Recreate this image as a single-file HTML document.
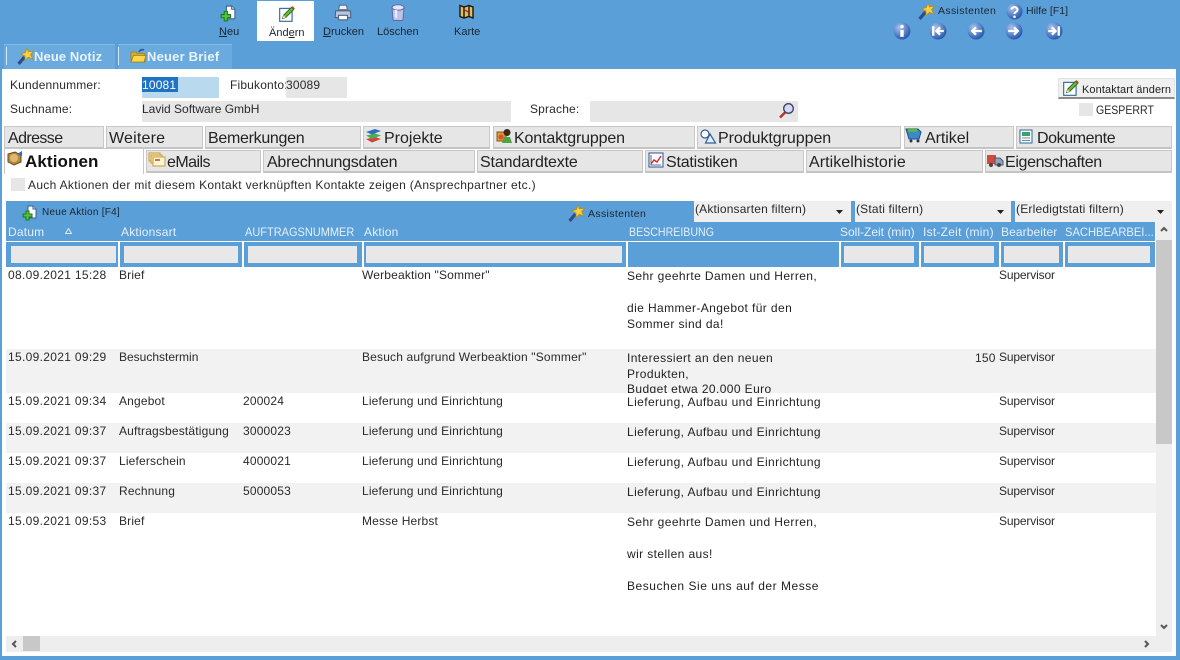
<!DOCTYPE html>
<html lang="de"><head><meta charset="utf-8"><title>Kontakt</title>
<style>
html,body{margin:0;padding:0}
body{width:1180px;height:660px;position:relative;overflow:hidden;background:#5b9fd9;font-family:"Liberation Sans",sans-serif;font-size:12px;color:#222}
div,span.a,svg.a{position:absolute}
.t{position:absolute;white-space:nowrap;line-height:14px}
.tb{font-size:11px;color:#1a2530;text-align:center}
.f{background:#e6e6e6}
.tab{position:absolute;background:#e6e6e6;border:1px solid #c8c8c8;border-bottom:2px solid #c4c4c4;box-sizing:border-box;font-size:16px;line-height:23px;color:#222;white-space:nowrap;padding-left:3px}
.r1{top:126px;height:23px}
.r2{top:150px;height:23px}
.g{font-size:12px;letter-spacing:.17px;color:#2a2a2a}
.n{font-size:12px;letter-spacing:.32px;color:#2a2a2a}
.s{font-size:12px;letter-spacing:-.15px;color:#2a2a2a}
.d{font-size:12px;letter-spacing:.4px;color:#222}
.h{font-size:12px;letter-spacing:.2px;color:#e4f0fa;top:225px}
.u{letter-spacing:0;transform-origin:0 50%}
.in{top:246px;height:17px;background:#e8e8e8}
.sep{top:242px;width:2px;height:25px;background:#fff}
</style></head><body>
<svg width="0" height="0" style="position:absolute"><defs>
<symbol id="wand" viewBox="0 0 16 16"><path d="M1.500 15L7 8.500" stroke="#2c4c8c" stroke-width="3"/><path d="M9.500 0l1.200 3.600L15.500 3l-2.800 3.200L15 10.500l-4.300-1.800L7.500 12l.1-4.500L3.500 5.500l4.300-1.200z" fill="#f7d23c" stroke="#b58a1a" stroke-width=".7"/></symbol>
<symbol id="doc" viewBox="0 0 16 16"><path d="M6 1h5l3 3v9H6z" fill="#fff" stroke="#3a5f8f"/><path d="M11 1v3h3" fill="#cfe0f0" stroke="#3a5f8f"/><path d="M4 6h3v3h3v3H7v3H4v-3H1V9h3z" fill="#53c23d" stroke="#1d7a18"/></symbol>
<symbol id="pen" viewBox="0 0 16 16"><rect x="1.500" y="3" width="11" height="11.500" fill="#fff" stroke="#2a6a9a"/><path d="M4 12l1-3 7-7 2 2-7 7z" fill="#6fb33c" stroke="#2d6a1a" stroke-width=".8"/><path d="M12 2l1-1 2 2-1 1z" fill="#d8402a"/><path d="M4 12l1-3 2 2z" fill="#f0d8a8"/></symbol>
</defs></svg>

<!-- top toolbar -->
<div style="left:257px;top:1px;width:57px;height:40px;background:#fff"></div>
<svg class="a" style="left:220px;top:5px" width="17" height="17"><use href="#doc"/></svg>
<svg class="a" style="left:278px;top:5px" width="18" height="18"><use href="#pen"/></svg>
<svg class="a" style="left:334px;top:4px" width="18" height="18" viewBox="0 0 16 16"><path d="M5 1h6l1 4H4z" fill="#eef0f6" stroke="#5a6f8c"/><path d="M1.500 6h13l.5 6H1z" fill="#b9c6dc" stroke="#4f6484"/><path d="M4 10h8v4H4z" fill="#fff" stroke="#4f6484"/></svg>
<svg class="a" style="left:390px;top:4px" width="16" height="17" viewBox="0 0 16 17"><path d="M2 4h12l-1 11.500a1 1 0 0 1-1 1H4a1 1 0 0 1-1-1z" fill="#bcc0ea" stroke="#5f6aa5"/><ellipse cx="8" cy="3.500" rx="6" ry="2.700" fill="#e4e6fa" stroke="#5f6aa5"/><path d="M6 6v8" stroke="#e9ebfb" stroke-width="2.500"/></svg>
<svg class="a" style="left:459px;top:4px" width="15" height="15" viewBox="0 0 15 15"><path d="M1 1.500l4 1.500 5-1.500 4 1.500v11L10 12.500 5 14l-4-1.500z" fill="#dfbd6a" stroke="#1c1606" stroke-width="1.400"/><path d="M5 3v11M10 1.500v11" stroke="#1c1606" stroke-width="1.400"/><path d="M6 6l3 2" stroke="#b33" stroke-width="1.500"/></svg>
<span class="t tb" style="left:219px;top:25px"><u>N</u>eu</span>
<span class="t tb" style="left:269px;top:26px">Änd<u>e</u>rn</span>
<span class="t tb" style="left:323px;top:25px"><u>D</u>rucken</span>
<span class="t tb" style="left:377px;top:25px">Löschen</span>
<span class="t tb" style="left:454px;top:25px">Karte</span>

<!-- top right -->
<svg class="a" style="left:918px;top:3px" width="17" height="17"><use href="#wand"/></svg>
<span class="t" style="left:938px;top:4px;font-size:10.500px;letter-spacing:.35px;color:#1a2530">Assistenten</span>
<svg class="a" style="left:1006px;top:3px" width="17" height="17" viewBox="0 0 17 17"><defs><radialGradient id="b" cx=".35" cy=".3" r=".8"><stop offset="0" stop-color="#a6c4ef"/><stop offset="1" stop-color="#1a4ca3"/></radialGradient></defs><circle cx="8.500" cy="8.500" r="8" fill="url(#b)"/><path d="M5.500 6.500a3 2.500 0 1 1 4.500 2.300c-1 .6-1.500 1-1.500 2.200" fill="none" stroke="#fff" stroke-width="2"/><circle cx="8.500" cy="13.800" r="1.300" fill="#fff"/></svg>
<span class="t" style="left:1026px;top:4px;font-size:10.500px;color:#1a2530">Hilfe [F1]</span>
<svg class="a" style="left:893px;top:22px" width="18" height="18" viewBox="0 0 17 17"><circle cx="8.500" cy="8.500" r="8" fill="url(#b)"/><circle cx="8.500" cy="4.300" r="1.700" fill="#fff"/><path d="M8.500 7.500v6.500" stroke="#fff" stroke-width="3.200"/></svg>
<svg class="a" style="left:929px;top:22px" width="18" height="18" viewBox="0 0 17 17"><circle cx="8.500" cy="8.500" r="8" fill="url(#b)"/><path d="M4 4v9" stroke="#fff" stroke-width="2.200"/><path d="M14 8.500H8M10.500 5l-3.500 3.500 3.500 3.500" fill="none" stroke="#fff" stroke-width="2.200"/></svg>
<svg class="a" style="left:967px;top:22px" width="18" height="18" viewBox="0 0 17 17"><circle cx="8.500" cy="8.500" r="8" fill="url(#b)"/><path d="M14 8.500H5M8.500 5L5 8.500 8.500 12" fill="none" stroke="#fff" stroke-width="2.200"/></svg>
<svg class="a" style="left:1005px;top:22px" width="18" height="18" viewBox="0 0 17 17"><circle cx="8.500" cy="8.500" r="8" fill="url(#b)"/><path d="M3 8.500h9M8.500 5L12 8.500 8.500 12" fill="none" stroke="#fff" stroke-width="2.200"/></svg>
<svg class="a" style="left:1045px;top:22px" width="18" height="18" viewBox="0 0 17 17"><circle cx="8.500" cy="8.500" r="8" fill="url(#b)"/><path d="M13 4v9" stroke="#fff" stroke-width="2.200"/><path d="M3 8.500h6M6.500 5L10 8.500 6.500 12" fill="none" stroke="#fff" stroke-width="2.200"/></svg>

<!-- note/letter buttons -->
<div style="left:4px;top:44px;width:111px;height:25px;background:#6aaadf;border-top:1px solid #82b8e4;box-sizing:border-box"></div>
<div style="left:6px;top:47px;width:1px;height:18px;background:#d5e6f5"></div>
<div style="left:118px;top:44px;width:114px;height:25px;background:#6aaadf;border-top:1px solid #82b8e4;box-sizing:border-box"></div>
<div style="left:118px;top:47px;width:1px;height:18px;background:#d5e6f5"></div>
<svg class="a" style="left:17px;top:48px" width="17" height="17"><use href="#wand"/></svg>
<svg class="a" style="left:130px;top:48px" width="17" height="16" viewBox="0 0 17 16"><path d="M1 4h5l1 1.500h8V14H1z" fill="#e0ac22" stroke="#a77c15" stroke-width=".8"/><path d="M1 14l2.500-6.500H16L14 14z" fill="#f8d64e" stroke="#a77c15" stroke-width=".8"/><path d="M9 4c1-2 3-3 5-2" fill="none" stroke="#2f5c9c" stroke-width="1.800"/></svg>
<span class="t" style="left:34px;top:50px;font-size:13px;letter-spacing:.1px;font-weight:bold;color:#e9f3fb">Neue Notiz</span>
<span class="t" style="left:147px;top:50px;font-size:13px;letter-spacing:.2px;font-weight:bold;color:#e9f3fb">Neuer Brief</span>

<!-- main panel -->
<div style="left:2px;top:69px;width:1174px;height:587px;background:#fff"></div>

<span class="t g" style="left:10px;top:78px">Kundennummer:</span>
<div style="left:142px;top:77px;width:77px;height:21px;background:#b9d9ee"></div>
<div style="left:142px;top:77px;width:36px;height:15px;background:#1f73c4"></div>
<span class="t g" style="left:142px;top:78px;color:#fff">10081</span>
<span class="t g" style="left:230px;top:78px">Fibukonto:</span>
<div class="f" style="left:286px;top:77px;width:61px;height:21px"></div>
<span class="t g" style="left:286px;top:78px">30089</span>
<span class="t g" style="left:10px;top:102px">Suchname:</span>
<div class="f" style="left:142px;top:101px;width:369px;height:21px"></div>
<span class="t" style="left:142px;top:102px;color:#2a2a2a">Lavid Software GmbH</span>
<span class="t g" style="left:530px;top:102px">Sprache:</span>
<div class="f" style="left:590px;top:101px;width:208px;height:21px"></div>
<svg class="a" style="left:778px;top:102px" width="17" height="17" viewBox="0 0 17 17"><path d="M2 15.500l5-5" stroke="#b5352a" stroke-width="2.500"/><circle cx="10.500" cy="6.500" r="4.800" fill="#d5d9f5" stroke="#3a3f6a" stroke-width="1.300"/></svg>

<div style="left:1058px;top:78px;width:117px;height:21px;background:#f0f0f0;border:1px solid #e2e2e2;border-bottom:2px solid #8a8a8a;box-sizing:border-box"></div>
<svg class="a" style="left:1062px;top:79px" width="18" height="18"><use href="#pen"/></svg>
<span class="t" style="left:1082px;top:83px;font-size:11px;letter-spacing:.1px">Kontaktart ändern</span>
<div class="f" style="left:1079px;top:103px;width:14px;height:13px"></div>
<span class="t u" style="left:1096px;top:103px;font-size:12px;transform:scaleX(.88);color:#2a2a2a">GESPERRT</span>

<!-- tabs row 1 -->
<div class="tab r1" style="left:4px;width:100px;letter-spacing:-.6px">Adresse</div>
<div class="tab r1" style="left:106px;width:97px;padding-left:2px;letter-spacing:.2px">Weitere</div>
<div class="tab r1" style="left:205px;width:156px;padding-left:2px;letter-spacing:-.3px">Bemerkungen</div>
<div class="tab r1" style="left:363px;width:127px;padding-left:20px">Projekte</div>
<div class="tab r1" style="left:493px;width:202px;padding-left:20px;letter-spacing:-.15px">Kontaktgruppen</div>
<div class="tab r1" style="left:697px;width:204px;padding-left:20px;letter-spacing:-.05px">Produktgruppen</div>
<div class="tab r1" style="left:904px;width:110px;padding-left:20px;letter-spacing:-.05px">Artikel</div>
<div class="tab r1" style="left:1016px;width:156px;padding-left:20px;letter-spacing:-.4px">Dokumente</div>
<!-- tabs row 2 -->
<div class="tab r2" style="left:146px;width:115px;padding-left:20px;letter-spacing:-.55px">eMails</div>
<div class="tab r2" style="left:263px;width:212px;letter-spacing:-.25px">Abrechnungsdaten</div>
<div class="tab r2" style="left:477px;width:166px;padding-left:2px;letter-spacing:-.15px">Standardtexte</div>
<div class="tab r2" style="left:645px;width:159px;padding-left:20px;letter-spacing:-.2px">Statistiken</div>
<div class="tab r2" style="left:806px;width:177px;padding-left:2px;letter-spacing:.05px">Artikelhistorie</div>
<div class="tab r2" style="left:985px;width:187px;padding-left:19px;letter-spacing:-.35px">Eigenschaften</div>
<div style="left:4px;top:148px;width:140px;height:26px;background:#fff;border:1px solid #c8c8c8;border-bottom:0;box-sizing:border-box"></div>
<span class="t" style="left:25px;top:152px;font-size:17px;line-height:20px;letter-spacing:.1px;font-weight:bold;color:#111">Aktionen</span>

<!-- tab icons -->
<svg class="a" style="left:365px;top:128px" width="17" height="16" viewBox="0 0 17 16"><path d="M1 11l9-2 6 2-9 3.500z" fill="#d8423a"/><path d="M1 7.500l9-2 6 2-9 3.500z" fill="#4cae4c"/><path d="M1 4l9-3 6 2-9 3.500z" fill="#2f6cc0"/></svg>
<svg class="a" style="left:496px;top:128px" width="17" height="16" viewBox="0 0 17 16"><rect x="1" y="4" width="9" height="9" fill="#dd9a3a" stroke="#8a5a15"/><circle cx="11" cy="4.500" r="3.500" fill="#3a2a1a"/><path d="M6 15l2-6h6l2 6z" fill="#4ba63e"/><circle cx="5" cy="9" r="2.500" fill="#d9503a"/></svg>
<svg class="a" style="left:700px;top:129px" width="17" height="15" viewBox="0 0 17 15"><circle cx="5" cy="5" r="4" fill="#fff" stroke="#2d5f9f" stroke-width="1.200"/><path d="M10 5l5.500 9h-10z" fill="#e8f0fa" stroke="#2d5f9f" stroke-width="1.200"/></svg>
<svg class="a" style="left:905px;top:127px" width="18" height="16" viewBox="0 0 18 16"><path d="M1 2h12l3 3-2 7H4z" fill="#3d88c8" stroke="#1d4f80"/><path d="M3 2h9v3H3z" fill="#54b648"/><circle cx="6" cy="14" r="1.500" fill="#334"/><circle cx="13" cy="14" r="1.500" fill="#334"/></svg>
<svg class="a" style="left:1019px;top:129px" width="15" height="15" viewBox="0 0 15 15"><rect x="1" y="1" width="12" height="13" fill="#fff" stroke="#2a6a9a"/><rect x="3" y="3" width="8" height="4" fill="#3aa06a"/><path d="M3 9h8M3 11.500h8" stroke="#6a8aa8"/></svg>
<svg class="a" style="left:6px;top:150px" width="18" height="16" viewBox="0 0 18 16"><path d="M2 4l7-2 6 3v7l-7 3-6-3z" fill="#b78a3e" stroke="#6a4a15"/><circle cx="8" cy="8" r="4" fill="#e0b870"/><path d="M11 4l5-3v5z" fill="#2f6fbf"/></svg>
<svg class="a" style="left:148px;top:152px" width="18" height="15" viewBox="0 0 18 15"><rect x="1" y="1" width="11" height="8" fill="#f8e8b8" stroke="#c89a3a"/><rect x="3" y="3" width="11" height="8" fill="#f8e8b8" stroke="#c89a3a"/><rect x="5" y="5" width="12" height="9" fill="#fff5d5" stroke="#c89a3a"/><path d="M7 8h5" stroke="#c8442a" stroke-width="1.500"/></svg>
<svg class="a" style="left:648px;top:152px" width="16" height="16" viewBox="0 0 16 16"><rect x="1" y="1" width="14" height="14" fill="#fff" stroke="#2a4f9a"/><path d="M3 12l3-4 3 2 4-6" fill="none" stroke="#cc2b2b" stroke-width="1.400"/><path d="M3 3v10h10" fill="none" stroke="#5a6a8a"/></svg>
<svg class="a" style="left:986px;top:152px" width="18" height="16" viewBox="0 0 18 16"><path d="M1 3h9v9H1z" fill="#cf4a3a"/><path d="M9 6h5l3 3v4H9z" fill="#8fa4bc" stroke="#4a5a70"/><circle cx="5" cy="13" r="2" fill="#444"/><circle cx="13" cy="13" r="2" fill="#444"/></svg>

<!-- checkbox -->
<div class="f" style="left:11px;top:178px;width:14px;height:13px"></div>
<span class="t" style="left:28px;top:178px;letter-spacing:.31px;color:#2a2a2a">Auch Aktionen der mit diesem Kontakt verknüpften Kontakte zeigen (Ansprechpartner etc.)</span>

<!-- grid toolbar -->
<div style="left:6px;top:201px;width:1149px;height:66px;background:#5b9fd9"></div>
<div style="left:1155px;top:201px;width:17px;height:21px;background:#5b9fd9"></div>
<svg class="a" style="left:22px;top:205px" width="16" height="16"><use href="#doc"/></svg>
<span class="t" style="left:42px;top:206px;font-size:10px;letter-spacing:.25px;color:#1a2530">Neue Aktion [F4]</span>
<svg class="a" style="left:568px;top:205px" width="17" height="17"><use href="#wand"/></svg>
<span class="t" style="left:588px;top:207px;font-size:10.500px;letter-spacing:.35px;color:#1a2530">Assistenten</span>
<div style="left:694px;top:201px;width:157px;height:21px;background:#efefef"></div>
<div style="left:855px;top:201px;width:156px;height:21px;background:#efefef"></div>
<div style="left:1015px;top:201px;width:157px;height:21px;background:#efefef"></div>
<span class="t g" style="left:695px;top:202px">(Aktionsarten filtern)</span>
<span class="t g" style="left:856px;top:202px">(Stati filtern)</span>
<span class="t g" style="left:1016px;top:202px;letter-spacing:.2px">(Erledigtstati filtern)</span>
<svg class="a" style="left:836px;top:210px" width="7" height="4"><path d="M0 0h7L3.500 4z" fill="#222"/></svg>
<svg class="a" style="left:997px;top:210px" width="7" height="4"><path d="M0 0h7L3.500 4z" fill="#222"/></svg>
<svg class="a" style="left:1157px;top:210px" width="7" height="4"><path d="M0 0h7L3.500 4z" fill="#222"/></svg>

<!-- header -->
<span class="t h" style="left:8px">Datum</span>
<svg class="a" style="left:65px;top:228px" width="7" height="6"><path d="M3.500 .5L6.500 5.500H.5z" fill="none" stroke="#dfeaf5"/></svg>
<span class="t h" style="left:121px">Aktionsart</span>
<span class="t h u" style="left:245px;transform:scaleX(.916)">AUFTRAGSNUMMER</span>
<span class="t h" style="left:364px">Aktion</span>
<span class="t h u" style="left:629px;transform:scaleX(.885)">BESCHREIBUNG</span>
<span class="t h" style="left:840px;letter-spacing:0">Soll-Zeit (min)</span>
<span class="t h" style="left:923px;letter-spacing:.25px">Ist-Zeit (min)</span>
<span class="t h" style="left:1001px;letter-spacing:.1px">Bearbeiter</span>
<span class="t h u" style="left:1065px;transform:scaleX(.93)">SACHBEARBEI...</span>

<div style="left:6px;top:241px;width:1149px;height:1px;background:#fff"></div>
<div class="sep" style="left:118px"></div><div class="sep" style="left:242px"></div><div class="sep" style="left:362px"></div><div class="sep" style="left:626px"></div><div class="sep" style="left:839px"></div><div class="sep" style="left:919px"></div><div class="sep" style="left:999px"></div><div class="sep" style="left:1063px"></div>
<div class="in" style="left:11px;width:105px"></div>
<div class="in" style="left:124px;width:114px"></div>
<div class="in" style="left:248px;width:109px"></div>
<div class="in" style="left:366px;width:256px"></div>
<div class="in" style="left:844px;width:70px"></div>
<div class="in" style="left:924px;width:70px"></div>
<div class="in" style="left:1004px;width:55px"></div>
<div class="in" style="left:1068px;width:82px"></div>

<!-- rows -->
<div style="left:6px;top:349px;width:1150px;height:44px;background:#f2f2f2"></div>
<div style="left:6px;top:423px;width:1150px;height:30px;background:#f2f2f2"></div>
<div style="left:6px;top:483px;width:1150px;height:30px;background:#f2f2f2"></div>

<span class="t n" style="left:8px;top:268px">08.09.2021 15:28</span><span class="t g" style="left:119px;top:268px">Brief</span><span class="t g" style="left:362px;top:268px">Werbeaktion "Sommer"</span><span class="t s" style="left:999px;top:268px">Supervisor</span>
<span class="t d" style="left:627px;top:269px">Sehr geehrte Damen und Herren,</span>
<span class="t d" style="left:627px;top:301px">die Hammer-Angebot für den</span>
<span class="t d" style="left:627px;top:317px">Sommer sind da!</span>

<span class="t n" style="left:8px;top:350px">15.09.2021 09:29</span><span class="t" style="left:119px;top:350px;color:#2a2a2a">Besuchstermin</span><span class="t g" style="left:362px;top:350px">Besuch aufgrund Werbeaktion "Sommer"</span><span class="t g" style="left:975px;top:351px">150</span><span class="t s" style="left:999px;top:350px">Supervisor</span>
<span class="t d" style="left:627px;top:351px">Interessiert an den neuen</span>
<span class="t d" style="left:627px;top:367px">Produkten,</span>
<div style="left:627px;top:381px;width:200px;height:12px;overflow:hidden"><span class="t d" style="left:0;top:1px">Budget etwa 20.000 Euro</span></div>

<span class="t n" style="left:8px;top:394px">15.09.2021 09:34</span><span class="t g" style="left:119px;top:394px">Angebot</span><span class="t g" style="left:243px;top:394px">200024</span><span class="t g" style="left:362px;top:394px">Lieferung und Einrichtung</span><span class="t d" style="left:627px;top:395px">Lieferung, Aufbau und Einrichtung</span><span class="t s" style="left:999px;top:394px">Supervisor</span>
<span class="t n" style="left:8px;top:424px">15.09.2021 09:37</span><span class="t g" style="left:119px;top:424px">Auftragsbestätigung</span><span class="t g" style="left:243px;top:424px">3000023</span><span class="t g" style="left:362px;top:424px">Lieferung und Einrichtung</span><span class="t d" style="left:627px;top:425px">Lieferung, Aufbau und Einrichtung</span><span class="t s" style="left:999px;top:424px">Supervisor</span>
<span class="t n" style="left:8px;top:454px">15.09.2021 09:37</span><span class="t g" style="left:119px;top:454px">Lieferschein</span><span class="t g" style="left:243px;top:454px">4000021</span><span class="t g" style="left:362px;top:454px">Lieferung und Einrichtung</span><span class="t d" style="left:627px;top:455px">Lieferung, Aufbau und Einrichtung</span><span class="t s" style="left:999px;top:454px">Supervisor</span>
<span class="t n" style="left:8px;top:484px">15.09.2021 09:37</span><span class="t g" style="left:119px;top:484px">Rechnung</span><span class="t g" style="left:243px;top:484px">5000053</span><span class="t g" style="left:362px;top:484px">Lieferung und Einrichtung</span><span class="t d" style="left:627px;top:485px">Lieferung, Aufbau und Einrichtung</span><span class="t s" style="left:999px;top:484px">Supervisor</span>
<span class="t n" style="left:8px;top:514px">15.09.2021 09:53</span><span class="t g" style="left:119px;top:514px">Brief</span><span class="t g" style="left:362px;top:514px">Messe Herbst</span><span class="t s" style="left:999px;top:514px">Supervisor</span>
<span class="t d" style="left:627px;top:515px">Sehr geehrte Damen und Herren,</span>
<span class="t d" style="left:627px;top:547px">wir stellen aus!</span>
<span class="t d" style="left:627px;top:579px;letter-spacing:.53px">Besuchen Sie uns auf der Messe</span>

<!-- scrollbars -->
<div style="left:1156px;top:222px;width:16px;height:430px;background:#eee"></div>
<div style="left:1156px;top:240px;width:16px;height:204px;background:#c8c8c8"></div>
<svg class="a" style="left:1160px;top:226px" width="8" height="6"><path d="M1 5l3-3 3 3" fill="none" stroke="#555" stroke-width="2"/></svg>
<svg class="a" style="left:1160px;top:624px" width="8" height="6"><path d="M1 1l3 3 3-3" fill="none" stroke="#555" stroke-width="2"/></svg>
<div style="left:6px;top:636px;width:1150px;height:16px;background:#eee"></div>
<div style="left:23px;top:636px;width:17px;height:15px;background:#c8c8c8"></div>
<svg class="a" style="left:11px;top:640px" width="6" height="8"><path d="M5 1L2 4l3 3" fill="none" stroke="#555" stroke-width="2"/></svg>
<svg class="a" style="left:1144px;top:640px" width="6" height="8"><path d="M1 1l3 3-3 3" fill="none" stroke="#555" stroke-width="2"/></svg>
</body></html>
